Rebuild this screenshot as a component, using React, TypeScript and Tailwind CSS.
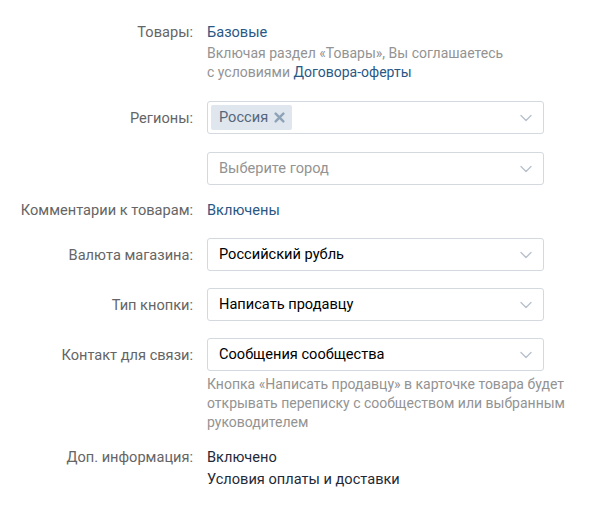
import React from "react";

const Chevron = () => (
  <svg width="12" height="8" viewBox="0 0 12 8" className="shrink-0">
    <path d="M1 1.5l5 5 5-5" fill="none" stroke="#b8c1cc" strokeWidth="1.4" strokeLinecap="round" strokeLinejoin="round" />
  </svg>
);

const Select = ({ children, placeholder }: { children?: React.ReactNode; placeholder?: string }) => (
  <div className="flex h-[33px] w-[337px] items-center justify-between rounded-[3px] border border-[#d3d9de] bg-white pl-[11px] pr-[11px]">
    <div className="flex items-center text-[#000]">
      {placeholder ? <span className="text-[#939393]">{placeholder}</span> : children}
    </div>
    <Chevron />
  </div>
);

const Row = ({ label, children, className = "", center = false }: { label: string; children: React.ReactNode; className?: string; center?: boolean }) => (
  <div className={`flex ${center ? "items-center" : "items-start"} ${className}`}>
    <div className="w-[193px] shrink-0 whitespace-nowrap text-right text-[#656565] leading-[20px]">{label}</div>
    <div className="ml-[14px]">{children}</div>
  </div>
);

export default function App() {
  return (
    <div
      className="h-[513px] w-[597px] bg-white pt-[22px] text-[14.6px]"
      style={{ fontFamily: "Roboto, 'Noto Sans', sans-serif" }}
    >
      <Row label="Товары:">
        <div className="leading-[20px] text-[#2a5885]">Базовые</div>
        <div className="mt-[2px] text-[14px] leading-[19px] text-[#939393]">
          Включая раздел «Товары», Вы соглашаетесь
          <br />с условиями <span className="text-[#2a5885]">Договора-оферты</span>
        </div>
      </Row>

      <Row label="Регионы:" center className="mt-[19px]">
        <div className="flex h-[33px] w-[337px] items-center justify-between rounded-[3px] border border-[#d3d9de] bg-white pl-[3px] pr-[11px]">
          <div className="flex h-[25px] items-center rounded-[2px] bg-[#dfe6ed] pl-[8px] pr-[7px] text-[#55677d]">
            Россия
            <svg width="11" height="11" viewBox="0 0 10 10" className="ml-[6px]">
              <path d="M1.5 1.5l7 7M8.5 1.5l-7 7" stroke="#8fa3b8" strokeWidth="2.2" strokeLinecap="round" />
            </svg>
          </div>
          <Chevron />
        </div>
      </Row>

      <Row label="" center className="mt-[18px]">
        <Select placeholder="Выберите город" />
      </Row>

      <Row label="Комментарии к товарам:" className="mt-[15px]">
        <div className="leading-[20px] text-[#2a5885]">Включены</div>
      </Row>

      <Row label="Валюта магазина:" center className="mt-[18px]">
        <Select>Российский рубль</Select>
      </Row>

      <Row label="Тип кнопки:" center className="mt-[17px]">
        <Select>Написать продавцу</Select>
      </Row>

      <Row label="Контакт для связи:" center className="mt-[17px]">
        <Select>Сообщения сообщества</Select>
      </Row>

      <div className="ml-[207px] mt-[4px] text-[14px] leading-[19px] text-[#939393]">
        Кнопка «Написать продавцу» в карточке товара будет
        <br />
        открывать переписку с сообществом или выбранным
        <br />
        руководителем
      </div>

      <div className="mt-[14px] flex items-start">
        <div className="w-[193px] shrink-0 text-right leading-[22px] text-[#656565]">Доп. информация:</div>
        <div className="ml-[14px] leading-[22px] text-[#1f2a38]">
          <div>Включено</div>
          <div>Условия оплаты и доставки</div>
        </div>
      </div>
    </div>
  );
}
